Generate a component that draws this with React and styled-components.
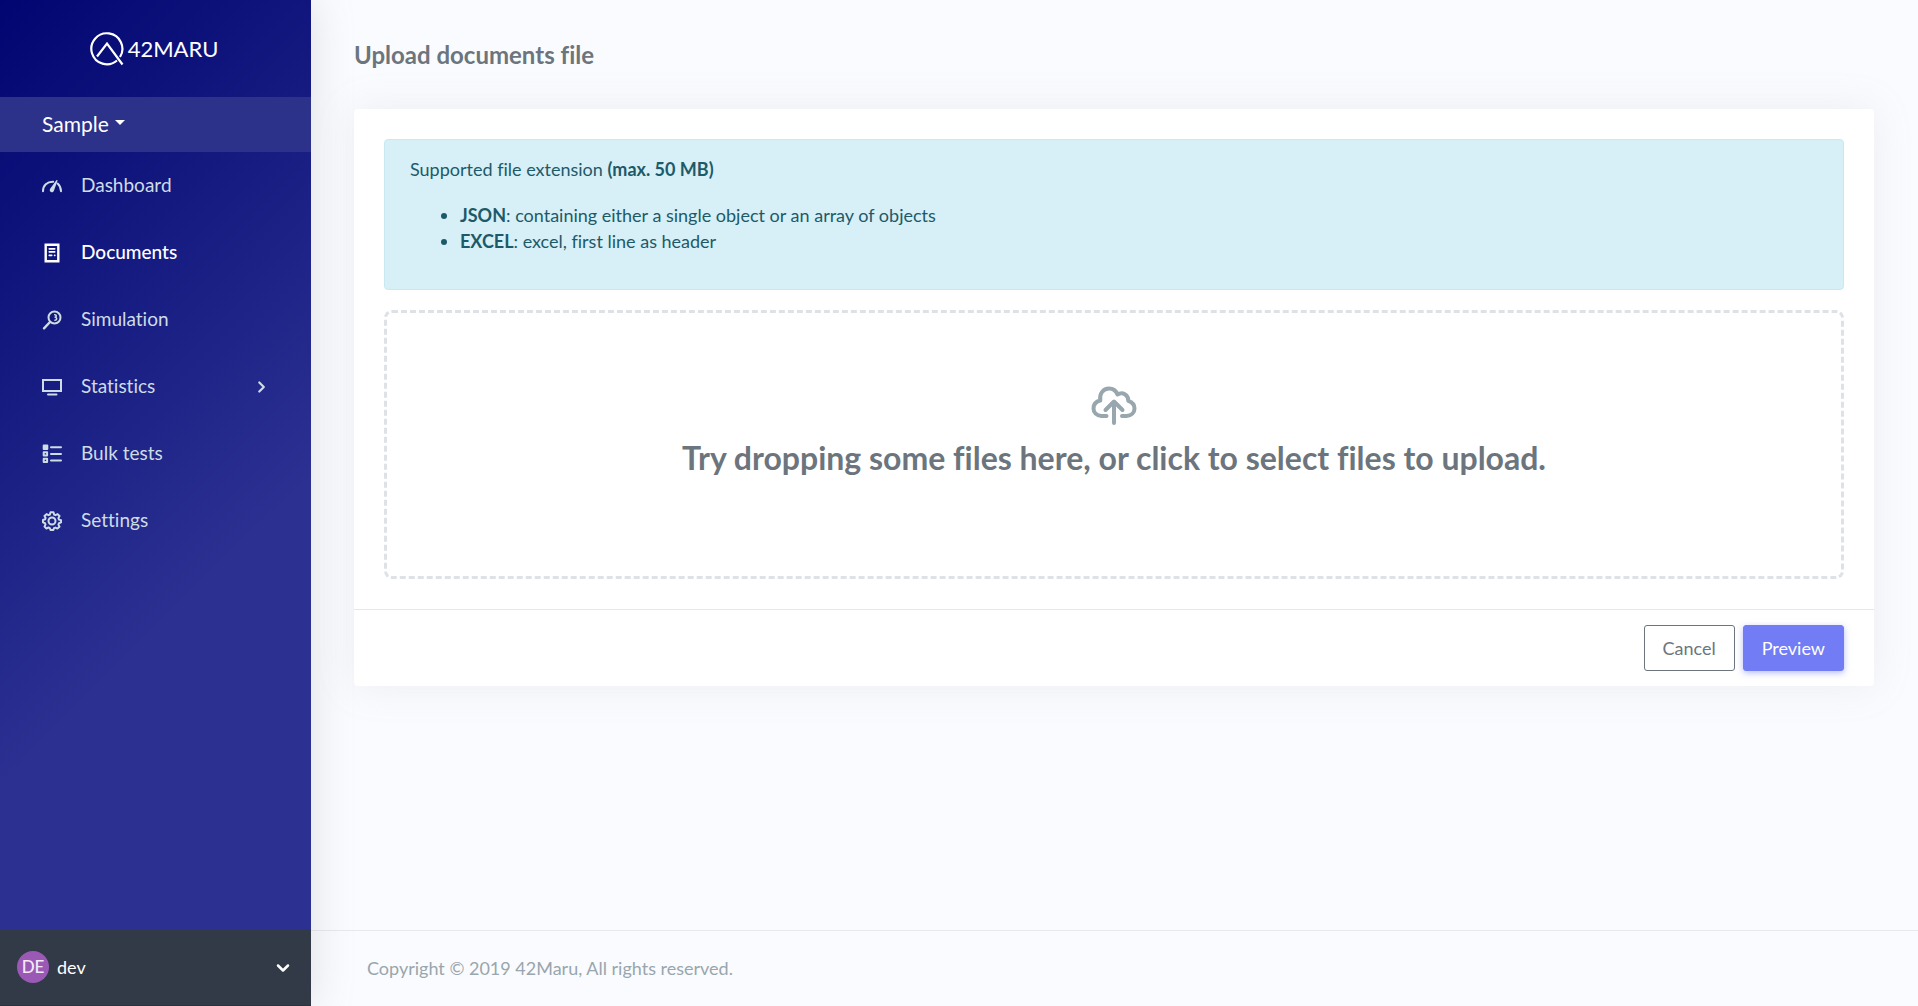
import React from "react";
import styled, { createGlobalStyle } from "styled-components";

const GlobalStyle = createGlobalStyle`
  *, *::before, *::after { box-sizing: border-box; }
  body {
    margin: 0;
    background: #fafbfe;
    color: #6c757d;
    font-family: Lato, "Open Sans", sans-serif;
    font-size: 18px;
    font-variant-ligatures: none;
    line-height: 26px;
  }
  button { font: inherit; cursor: pointer; }
  h1, h2, p, ul { margin: 0; }
`;

const Layout = styled.div`
  display: flex;
  min-height: 100vh;
`;

const Sidebar = styled.aside`
  display: flex;
  flex-direction: column;
  flex: 0 0 311px;
  position: relative;
  background: linear-gradient(135deg, #000571 0%, #2b3091 60%);
  box-shadow: 0 0 39px rgba(154, 161, 171, 0.3);
`;

const Brand = styled.a`
  display: flex;
  align-items: center;
  justify-content: center;
  gap: 4px;
  height: 97px;
  padding-right: 3px;
  color: #fff;
  font-size: 22px;
  line-height: 28px;
  text-decoration: none;
`;

const ProjectToggle = styled.button`
  display: flex;
  align-items: center;
  gap: 6px;
  height: 55px;
  padding: 0 42px 2px;
  border: 0;
  background: #2c3289;
  color: #fff;
  font-size: 21px;
`;

const Caret = styled.span`
  border: 5px solid transparent;
  border-top-color: #fff;
  border-bottom: 0;
  margin-bottom: 3px;
`;

const Nav = styled.nav`
  flex: 1;
`;

const NavLink = styled.a`
  display: flex;
  align-items: center;
  gap: 19px;
  height: 67px;
  padding: 0 40px 0 42px;
  color: ${(p) => (p.$active ? "#fff" : "#cedce4")};
  font-size: 19px;
  font-weight: ${(p) => (p.$active ? 500 : 400)};
  text-decoration: none;
`;

const NavLabel = styled.span`
  flex: 1;
  padding-bottom: 2px;
`;

const UserToggle = styled.button`
  display: flex;
  align-items: center;
  gap: 8px;
  height: 77px;
  padding: 0 18px 0 17px;
  border: 0;
  border-bottom: 1px solid #2b323d;
  background: #313a46;
  color: #fff;
  text-align: left;
`;

const Avatar = styled.span`
  width: 32px;
  height: 32px;
  border-radius: 50%;
  background: #9b59b6;
  color: #f3e9f7;
  font-size: 17px;
  font-weight: 500;
  line-height: 32px;
  text-align: center;
`;

const UserName = styled.span`
  flex: 1;
`;

const Page = styled.div`
  display: flex;
  flex: 1;
  flex-direction: column;
  min-width: 0;
`;

const Main = styled.main`
  flex: 1;
  padding: 0 44px 40px 43px;
`;

const Title = styled.h1`
  padding: 39px 0 38px;
  font-size: 24px;
  font-weight: 700;
  line-height: 32px;
`;

const Card = styled.form`
  border-radius: 4px;
  background: #fff;
  box-shadow: 0 0 39px rgba(154, 161, 171, 0.15);
`;

const CardBody = styled.div`
  display: flex;
  flex-direction: column;
  gap: 20px;
  padding: 30px;
`;

const Notice = styled.section`
  padding: 16px 25px 35px;
  border: 1px solid #c8e9f1;
  border-radius: 4px;
  background: #d7eff6;
  color: #1d5a69;
`;

const FormatList = styled.ul`
  padding: 20px 0 0 50px;
`;

const DropZone = styled.label`
  display: flex;
  flex-direction: column;
  align-items: center;
  height: 269px;
  padding-top: 73px;
  border: 3px dashed #dee2e6;
  border-radius: 8px;
  cursor: pointer;
`;

const FileInput = styled.input`
  position: absolute;
  width: 1px;
  height: 1px;
  opacity: 0;
`;

const DropText = styled.span`
  margin-top: 12px;
  font-size: 32px;
  font-weight: 700;
  line-height: 40px;
  text-align: center;
`;

const CardFooter = styled.div`
  display: flex;
  justify-content: flex-end;
  gap: 8px;
  padding: 15px 30px;
  border-top: 1px solid #e3e7ee;
`;

const Button = styled.button`
  height: 46px;
  padding: 0 18px;
  border: 1px solid ${(p) => (p.$primary ? "#727cf5" : "#6c757d")};
  border-radius: 3px;
  background: ${(p) => (p.$primary ? "#727cf5" : "#fff")};
  box-shadow: ${(p) => (p.$primary ? "0 2px 6px rgba(114, 124, 245, 0.5)" : "none")};
  color: ${(p) => (p.$primary ? "#fff" : "#6c757d")};
`;

const Footer = styled.footer`
  height: 76px;
  padding: 24px 56px;
  border-top: 1px solid #e6e8ec;
  color: #98a6ad;
`;

function Icon({ size = 20, width = 2, children }) {
  return (
    <svg
      width={size}
      height={size}
      viewBox="0 0 20 20"
      fill="none"
      stroke="currentColor"
      strokeWidth={width}
      strokeLinecap="round"
      strokeLinejoin="round"
      aria-hidden="true"
    >
      {children}
    </svg>
  );
}

const icons = {
  dashboard: (
    <Icon width={2}>
      <path d="M1 15.200C1 9.500 5 5.600 11.200 5.800M15.600 7.600c2 1.700 3.200 4.300 3.400 7.600" />
      <path d="M14.900 4.600L8.500 13.500a1.500 1.500 0 0 0 2.700 1.300z" fill="currentColor" strokeWidth="1.300" />
    </Icon>
  ),
  documents: (
    <Icon width={2.400}>
      <path d="M3.700 1.700h12.600v16.600h-12.600z" strokeLinejoin="miter" />
      <path d="M7.300 5.800h5.400M7.300 8.800h5.400M7.300 12.300h2.400M12.600 12.300h.2" strokeWidth="1.700" />
    </Icon>
  ),
  simulation: (
    <Icon>
      <circle cx="12.500" cy="7.500" r="6" />
      <path d="M8 12l-6 6.300" strokeWidth="2.400" />
      <path d="M12.700 4.700c2 .3 2.200 2 .4 2.600 2.200.2 2.200 2.600-.1 3" strokeWidth="1.500" />
    </Icon>
  ),
  statistics: (
    <Icon>
      <path d="M1 3h18v11H1z" strokeLinejoin="miter" />
      <path d="M6 17.500h8.500" />
    </Icon>
  ),
  tests: (
    <Icon width={2}>
      <rect x="1.700" y="1.500" width="3.600" height="3.600" fill="currentColor" />
      <rect x="1.700" y="8.200" width="3.400" height="3.400" />
      <rect x="1.700" y="14.700" width="3.400" height="3.400" />
      <path d="M9 3.300h10M9 9.900h10M9 16.400h10" />
    </Icon>
  ),
  settings: (
    <Icon width={2}>
      <circle cx="10" cy="10" r="3.500" />
      <path d="M8.500 1.300h3l.6 2.300 1.300.6 2.200-1.100 1.900 1.900-1.100 2.100.6 1.500 2.100.6v2.200l-2.100.8-.6 1.400 1.100 2.100-2.100 1.900-2-1-1.400.6-.6 1.700H8.500l-.7-1.800-1.300-.6-2.100 1-1.900-1.900 1-2.100-.5-1.300-2-.8V9l2.100-.7.5-1.400-1.100-1.900 2-1.900 2 1.100 1.400-.6z" />
    </Icon>
  ),
};

function LogoMark() {
  return (
    <svg width="34" height="34" viewBox="0 0 34 34" fill="none" stroke="currentColor" strokeWidth="2.200" aria-hidden="true">
      <path d="M27 28.500A15.500 15.500 0 1 1 30 25" />
      <path d="M7 24.500L17 11.500l15.500 21" />
    </svg>
  );
}

function CloudUpload() {
  return (
    <svg width="46" height="40" viewBox="0 0 46 40" fill="none" stroke="#98a6ad" strokeWidth="4" strokeLinecap="round" strokeLinejoin="round" aria-hidden="true">
      <path d="M15.500 30H10.500C5.500 29.500 2.500 26.500 2.500 22.500C2.500 18.500 5 15.500 9.300 14.500C8 7.500 12.500 2.500 18 2.500C22 2.500 25 4.500 26.500 8.500C31.500 5.500 37.500 8.500 37.300 14.800C41 16 43.500 19 43.500 22.500C43.500 26.500 40.500 29.700 35.500 30H31" />
      <path d="M23 37V16M14.500 24L23 15.500L31.500 24" />
    </svg>
  );
}

const links = [
  { icon: "dashboard", label: "Dashboard" },
  { icon: "documents", label: "Documents", active: true },
  { icon: "simulation", label: "Simulation" },
  { icon: "statistics", label: "Statistics", expandable: true },
  { icon: "tests", label: "Bulk tests" },
  { icon: "settings", label: "Settings" },
];

export default function App() {
  return (
    <>
      <GlobalStyle />
      <Layout>
        <Sidebar>
          <Brand href="#">
            <LogoMark />
            <span>42MARU</span>
          </Brand>
          <ProjectToggle type="button" aria-haspopup="true">
            Sample
            <Caret />
          </ProjectToggle>
          <Nav>
            {links.map(({ icon, label, active, expandable }) => (
              <NavLink key={label} href="#" $active={active} aria-current={active ? "page" : undefined}>
                {icons[icon]}
                <NavLabel>{label}</NavLabel>
                {expandable && (
                  <Icon size={18} width={2.500}>
                    <path d="M7 5l5 5-5 5" />
                  </Icon>
                )}
              </NavLink>
            ))}
          </Nav>
          <UserToggle type="button" aria-haspopup="true">
            <Avatar>DE</Avatar>
            <UserName>dev</UserName>
            <Icon width={2.500}>
              <path d="M5 8.500l5 5 5-5" />
            </Icon>
          </UserToggle>
        </Sidebar>
        <Page>
          <Main>
            <Title>Upload documents file</Title>
            <Card onSubmit={(event) => event.preventDefault()}>
              <CardBody>
                <Notice>
                  <p>
                    Supported file extension <strong>(max. 50 MB)</strong>
                  </p>
                  <FormatList>
                    <li>
                      <strong>JSON</strong>: containing either a single object or an array of objects
                    </li>
                    <li>
                      <strong>EXCEL</strong>: excel, first line as header
                    </li>
                  </FormatList>
                </Notice>
                <DropZone>
                  <FileInput type="file" multiple />
                  <CloudUpload />
                  <DropText>Try dropping some files here, or click to select files to upload.</DropText>
                </DropZone>
              </CardBody>
              <CardFooter>
                <Button type="button">Cancel</Button>
                <Button type="submit" $primary>
                  Preview
                </Button>
              </CardFooter>
            </Card>
          </Main>
          <Footer>Copyright © 2019 42Maru, All rights reserved.</Footer>
        </Page>
      </Layout>
    </>
  );
}
